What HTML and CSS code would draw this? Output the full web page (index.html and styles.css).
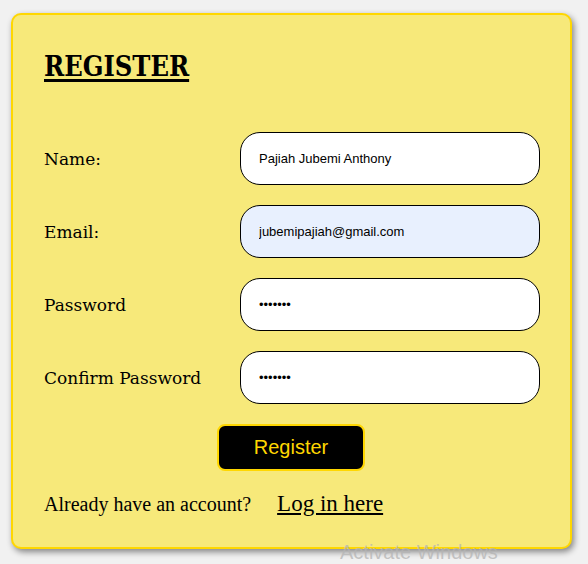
FILE: index.html
```html
<!DOCTYPE html>
<html>
<head>
<meta charset="utf-8">
<link rel="stylesheet" href="styles.css">
</head>
<body>
<div class="card">
  <h1 class="title">REGISTER</h1>
  <form class="form">
    <div class="row">
      <label class="label">Name:</label>
      <input class="field" type="text" value="Pajiah Jubemi Anthony">
    </div>
    <div class="row">
      <label class="label">Email:</label>
      <input class="field autofill" type="text" value="jubemipajiah@gmail.com">
    </div>
    <div class="row">
      <label class="label">Password</label>
      <input class="field" type="password" value="1234567">
    </div>
    <div class="row">
      <label class="label">Confirm Password</label>
      <input class="field" type="password" value="1234567">
    </div>
    <div class="actions">
      <button class="btn" type="button">Register</button>
    </div>
  </form>
  <p class="login">Already have an account? <a class="link" href="#">Log in here</a></p>
</div>
<div class="watermark">Activate Windows</div>
</body>
</html>
```
FILE: styles.css
```css
html, body {
  margin: 0;
  padding: 0;
}
body {
  background: #f1f1f1;
  width: 588px;
  height: 564px;
  overflow: hidden;
  position: relative;
}
.card {
  box-sizing: border-box;
  margin: 13px 0 0 11px;
  width: 561px;
  height: 536px;
  background: #f7e97a;
  border: 2px solid #ffd700;
  border-radius: 10px;
  box-shadow: 2px 3px 6px rgba(0,0,0,0.45);
  padding: 37px 0 0 31px;
}
.title {
  margin: 0;
  font-family: "DejaVu Serif Condensed", "DejaVu Serif", serif;
  font-stretch: condensed;
  font-weight: bold;
  font-size: 27px;
  line-height: 30px;
  text-decoration: underline;
  text-decoration-thickness: 3px;
  text-underline-offset: 3px;
  color: #000;
}
.form {
  margin-top: 50px;
  display: flex;
  flex-direction: column;
  gap: 20px;
}
.row {
  display: flex;
  align-items: center;
  height: 53px;
}
.label {
  width: 196px;
  font-family: "DejaVu Serif", serif;
  font-size: 17px;
  color: #000;
}
.field {
  box-sizing: border-box;
  width: 300px;
  height: 53px;
  border: 1px solid #000;
  border-radius: 20px;
  background: #fff;
  padding: 0 0 0 18px;
  font-family: "Liberation Sans", Arial, sans-serif;
  font-size: 13px;
  color: #000;
  outline: none;
}
.autofill {
  background: #e8f0fe;
}
.actions {
  display: flex;
  padding-left: 173px;
}
.btn {
  box-sizing: border-box;
  width: 148px;
  height: 47px;
  background: #000;
  border: 2px solid #ffd700;
  border-radius: 8px;
  color: #ffd700;
  font-family: "Liberation Sans", Arial, sans-serif;
  font-size: 20px;
  padding: 0;
}
.login {
  margin: 20px 0 0 0;
  font-family: "Liberation Serif", "Times New Roman", serif;
  font-size: 20px;
  color: #000;
}
.link {
  margin-left: 21px;
  font-size: 23px;
  color: #000;
  text-decoration: underline;
}
.watermark {
  position: absolute;
  left: 340px;
  top: 541px;
  font-family: "Liberation Sans", Arial, sans-serif;
  font-size: 20px;
  color: rgba(180,180,180,0.75);
}
```
